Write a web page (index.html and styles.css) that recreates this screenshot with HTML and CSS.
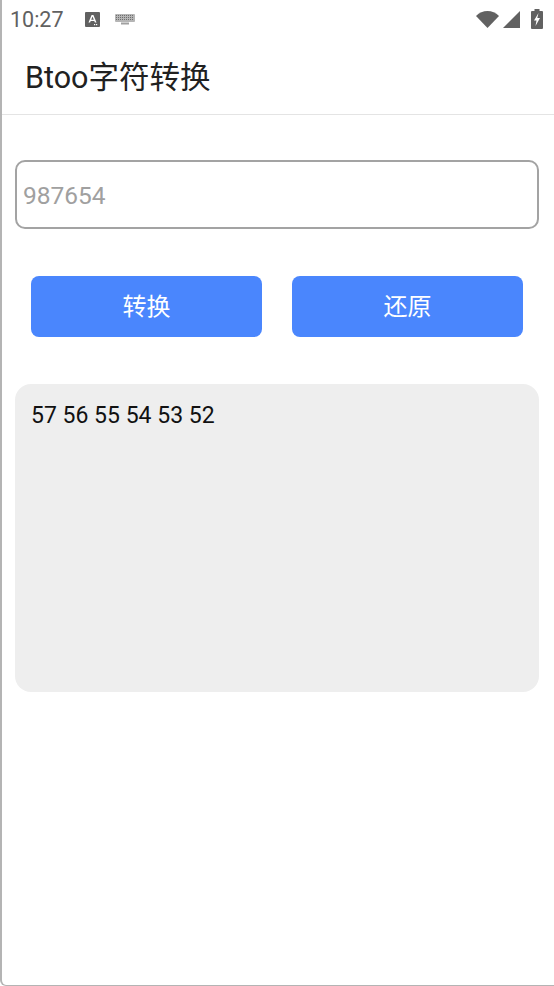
FILE: index.html
```html
<!DOCTYPE html>
<html lang="zh-CN">
<head>
  <meta charset="UTF-8">
  <title>Btoo字符转换</title>
  <link rel="stylesheet" href="styles.css">
</head>
<body>
  <div class="screen">
    <div class="status-bar">
      <span class="clock">10:27</span>
      <svg class="icon-a" width="15" height="15" viewBox="0 0 15 15">
        <rect width="15" height="15" rx="1" fill="#616161"/>
        <path d="M3.5 10.5 6.600 3h1.800l3.100 7.500H9.900L9.300 9H5.700l-.6 1.500zM6.200 7.700h2.600L7.500 4.600z" fill="#fff"/>
        <rect x="9" y="12" width="1.200" height="1.200" fill="#fff"/>
        <rect x="11" y="12" width="1.200" height="1.200" fill="#fff"/>
      </svg>
      <svg class="icon-kbd" width="20" height="11" viewBox="0 0 20 11">
        <rect width="20" height="8" rx="1" fill="#b5b5b5"/>
        <path d="M1 1.500h18M1 3.500h18M1 5.500h18" stroke="#6e6e6e" stroke-width="1" stroke-dasharray="1 1"/>
        <rect x="6" y="8.500" width="8" height="2" fill="#a0a0a0"/>
      </svg>
      <div class="status-right">
        <svg width="23" height="17" viewBox="0 0 23 17"><path d="M0 5C3.200 1.800 7.300 0 11.500 0S19.800 1.800 23 5L11.500 17z" fill="#616161"/></svg>
        <svg width="17" height="18" viewBox="0 0 17 18"><path d="M0 18 17 1v17z" fill="#616161"/></svg>
        <svg class="battery" width="12" height="20" viewBox="0 0 12 20">
          <path d="M3.500 0h5v2H11a1 1 0 0 1 1 1v16a1 1 0 0 1-1 1H1a1 1 0 0 1-1-1V3a1 1 0 0 1 1-1h2.500z" fill="#616161"/>
          <path d="M7.500 4 3 11.500h2.500L4.500 17 9 9H6.300z" fill="#fff"/>
        </svg>
      </div>
    </div>

    <header class="app-bar">Btoo字符转换</header>

    <main class="content">
      <div class="input-box">987654</div>
      <div class="actions">
        <button class="btn">转换</button>
        <button class="btn">还原</button>
      </div>
      <div class="result">57 56 55 54 53 52</div>
    </main>
  </div>
</body>
</html>
```

FILE: styles.css
```css
* {
  box-sizing: border-box;
}

html, body {
  margin: 0;
  height: 100%;
  background: #fff;
}

body {
  font-family: Roboto, "Noto Sans CJK SC", sans-serif;
}

.screen {
  height: 986px;
  border-left: 2px solid #b4b4b4;
  border-bottom: 1px solid #b4b4b4;
  border-bottom-left-radius: 6px;
  overflow: hidden;
}

.status-bar {
  height: 38px;
  padding: 0 11px 0 8px;
  display: flex;
  align-items: center;
  color: #616161;
}

.clock {
  font-size: 21.5px;
  width: 75px;
}

.icon-a {
  margin-right: 15px;
}

.status-right {
  margin-left: auto;
  display: flex;
  align-items: center;
  gap: 4px;
}

.battery {
  margin-left: 7px;
}

.app-bar {
  height: 77px;
  padding: 0 0 2px 23px;
  display: flex;
  align-items: center;
  font-size: 30.5px;
  color: #212121;
  border-bottom: 1px solid #e4e4e4;
}

.content {
  padding: 45px 15px 0 13px;
}

.input-box {
  height: 69px;
  padding: 2px 6px 0;
  display: flex;
  align-items: center;
  font-size: 24.5px;
  color: #a0a0a0;
  border: 2.5px solid #a3a3a3;
  border-radius: 10px;
}

.actions {
  margin-top: 47px;
  padding: 0 16px;
  display: flex;
  justify-content: space-between;
}

.btn {
  width: 231px;
  height: 61px;
  padding: 0 0 5px;
  border: none;
  border-radius: 8px;
  background: #4a86fd;
  color: #fff;
  font-family: inherit;
  font-size: 24px;
}

.result {
  margin-top: 47px;
  height: 308px;
  padding: 18px 16px;
  background: #eeeeee;
  border-radius: 16px;
  font-size: 23px;
  line-height: 28px;
  color: #111;
}
```
